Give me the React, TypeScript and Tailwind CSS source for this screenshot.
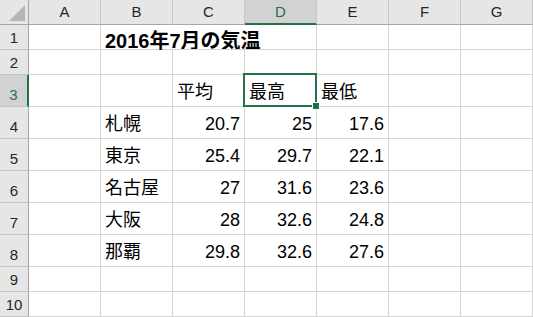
const FONT = '[font-family:"Liberation_Sans","Noto_Sans_CJK_JP",sans-serif]';

const columns = ['A', 'B', 'C', 'D', 'E', 'F', 'G'];

type Cell = { text: string; align?: 'left' | 'right' };

const L = (text: string): Cell => ({ text, align: 'left' });
const R = (text: string): Cell => ({ text, align: 'right' });
const E: Cell = { text: '' };

const body: Cell[][] = [
  [E, E, E, E, E, E, E],
  [E, E, E, E, E, E, E],
  [E, E, L('平均'), L('最高'), L('最低'), E, E],
  [E, L('札幌'), R('20.7'), R('25'), R('17.6'), E, E],
  [E, L('東京'), R('25.4'), R('29.7'), R('22.1'), E, E],
  [E, L('名古屋'), R('27'), R('31.6'), R('23.6'), E, E],
  [E, L('大阪'), R('28'), R('32.6'), R('24.8'), E, E],
  [E, L('那覇'), R('29.8'), R('32.6'), R('27.6'), E, E],
  [E, E, E, E, E, E, E],
  [E, E, E, E, E, E, E],
];

function CornerCell() {
  return (
    <div className="border-r border-b border-[#a6a6a6] bg-[#e6e6e6]">
      <svg width="28" height="24" viewBox="0 0 28 24">
        <polygon points="25,5 25,21 9,21" fill="#b5b5b5" />
      </svg>
    </div>
  );
}

function ColumnHeader({ label }: { label: string }) {
  const selected = label === 'D';
  return (
    <div
      className={
        selected
          ? 'flex items-end justify-center border-r border-r-[#c6c6c6] border-b-2 border-b-[#217346] bg-[#d2d2d2] pb-[4px] text-[15px] leading-[15px] text-[#217346]'
          : 'flex items-end justify-center border-r border-r-[#c6c6c6] border-b border-b-[#a6a6a6] bg-[#e6e6e6] pb-[5px] text-[15px] leading-[15px] text-[#262626]'
      }
    >
      {label}
    </div>
  );
}

function RowHeader({ n }: { n: number }) {
  const selected = n === 3;
  return (
    <div
      className={
        selected
          ? 'flex items-end justify-center border-r-2 border-r-[#217346] border-b border-b-[#c6c6c6] bg-[#d2d2d2] pb-[4px] text-[15px] leading-[15px] text-[#217346]'
          : 'flex items-end justify-center border-r border-r-[#a6a6a6] border-b border-b-[#c6c6c6] bg-[#e6e6e6] pb-[4px] text-[15px] leading-[15px] text-[#262626]'
      }
    >
      {n}
    </div>
  );
}

function DataCell({ cell }: { cell: Cell }) {
  return (
    <div
      className={
        cell.align === 'right'
          ? 'flex items-end justify-end border-r border-b border-[#d4d4d4] px-1 pb-[5px] text-[18px] leading-[18px] text-black'
          : 'flex items-end justify-start border-r border-b border-[#d4d4d4] px-1 pb-[5px] text-[18px] leading-[18px] text-black'
      }
    >
      {cell.text}
    </div>
  );
}

export default function App() {
  return (
    <div className={`relative h-[317px] w-[533px] overflow-hidden bg-white ${FONT}`}>
      <div className="grid grid-cols-[29px_repeat(7,72px)] grid-rows-[25px_25px_25px_32px_32px_32px_32px_32px_32px_25px_25px]">
        <CornerCell />
        {columns.map((c) => (
          <ColumnHeader key={c} label={c} />
        ))}

        {/* row 1: title overflows across B..D */}
        <RowHeader n={1} />
        <div className="border-r border-b border-[#d4d4d4]" />
        <div className="flex items-end whitespace-nowrap border-b border-[#d4d4d4] px-1 text-[20px] leading-[16px] font-bold text-black">
          2016年7月の気温
        </div>
        <div className="border-b border-[#d4d4d4]" />
        <div className="border-r border-b border-[#d4d4d4]" />
        <div className="border-r border-b border-[#d4d4d4]" />
        <div className="border-r border-b border-[#d4d4d4]" />
        <div className="border-r border-b border-[#d4d4d4]" />

        {body.slice(1).map((row, i) => (
          <div key={i} className="contents">
            <RowHeader n={i + 2} />
            {row.map((cell, j) => (
              <DataCell key={j} cell={cell} />
            ))}
          </div>
        ))}
      </div>

      {/* active cell D3 */}
      <div className="pointer-events-none absolute left-[243px] top-[73px] h-[34px] w-[74px] border-2 border-[#217346]" />
      <div className="pointer-events-none absolute left-[312px] top-[102px] h-[8px] w-[8px] border border-white bg-[#217346]" />
    </div>
  );
}
